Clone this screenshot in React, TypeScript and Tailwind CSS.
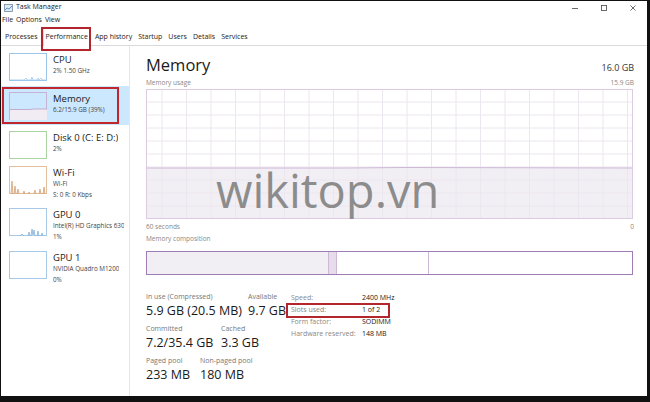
import React from "react";

const F = { fontFamily: '"Open Sans", "Noto Sans", sans-serif' };

function Thumb({ color, kind }: { color: string; kind: string }) {
  const w = 37;
  const h = 27;
  let content: React.ReactNode = null;
  if (kind === "cpu") {
    content = (
      <polyline
        fill="none"
        stroke={color}
        strokeWidth="0.8"
        points="0,26 14,26 16,24 17,26 21,26 22,23 23,26 27,26 28,24 29,26 31,24 32,26 37,26"
      />
    );
  } else if (kind === "mem") {
    content = (
      <>
        <rect x="0" y="16" width={w} height={11} fill="#f1ecf3" />
        <polyline fill="none" stroke="#b79cc4" strokeWidth="0.8" points="0,16.5 20,16.5 24,16 37,16" />
      </>
    );
  } else if (kind === "wifi") {
    content = (
      <g fill="#f3dcc8" stroke="#d09868" strokeWidth="0.7">
        <polygon points="1,27 2,14 3,27" />
        <polygon points="4,27 5,19 6,27" />
        <polygon points="7,27 8,22 9,27" />
        <polygon points="13,27 14,24 15,27" />
        <polygon points="18,27 19,25 20,27" />
        <polygon points="24,27 25,23 26,27" />
        <polygon points="29,27 30,22 31,27" />
        <polygon points="33,27 34,20 35,27" />
      </g>
    );
  } else if (kind === "gpu0") {
    content = (
      <g fill="#dcebf8" stroke="#79a9d6" strokeWidth="0.7">
        <polygon points="10,27 12,25 14,27" />
        <polygon points="18,27 19,23 20,27" />
        <polygon points="21,27 22,20 23,26 24,21 25,27" />
        <polygon points="27,27 28,22 29,27" />
        <polygon points="31,27 32,24 33,27" />
      </g>
    );
  }
  return (
    <div className="w-[38px] h-[28px] shrink-0" style={{ border: `1px solid ${color}` }}>
      <svg width={w} height={h} viewBox={`0 0 ${w} ${h}`} className="block">
        {content}
      </svg>
    </div>
  );
}

function SideItem({
  title,
  lines,
  color,
  kind,
  active,
  h,
}: {
  title: string;
  lines: string[];
  color: string;
  kind: string;
  active?: boolean;
  h: string;
}) {
  return (
    <div className={`relative flex items-start gap-[6px] pl-[8px] pt-[6px] ${h} ${active ? "bg-[#cce8ff]" : ""}`}>
      <Thumb color={color} kind={kind} />
      <div className="flex flex-col min-w-0 overflow-hidden whitespace-nowrap">
        <div className="text-[9.5px] leading-[13px] text-[#1a1a1a]">{title}</div>
        {lines.map((l, i) => (
          <div key={i} className="text-[6.3px] leading-[10.5px] text-[#444]">
            {l}
          </div>
        ))}
      </div>
      {active && (
        <div className="absolute left-[1px] top-[1px] w-[117px] h-[37px] border-2 border-[#c0272d]" />
      )}
    </div>
  );
}

function UsageGraph() {
  const W = 487;
  const H = 130;
  const vx: number[] = [];
  for (let x = 16; x < W; x += 24.5) vx.push(x);
  const hy: number[] = [];
  for (let y = 13; y < H; y += 13) hy.push(y);
  return (
    <svg width={W} height={H} viewBox={`0 0 ${W} ${H}`} className="block">
      <rect x="0" y="0" width={W} height={H} fill="#ffffff" />
      <rect x="0" y="79" width={W} height={H - 79} fill="#f2eff4" />
      {vx.map((x) => (
        <line key={"v" + x} x1={x} y1={0} x2={x} y2={H} stroke="#ece6ef" strokeWidth="1" />
      ))}
      {hy.map((y) => (
        <line key={"h" + y} x1={0} y1={y} x2={W} y2={y} stroke="#ece6ef" strokeWidth="1" />
      ))}
      <polyline fill="none" stroke="#cdb8d6" strokeWidth="1" points={`0,79 200,79 260,78.5 ${W},79`} />
      <rect x="0.5" y="0.5" width={W - 1} height={H - 1} fill="none" stroke="#dccbe3" strokeWidth="1" />
    </svg>
  );
}

function Stat({ label, value, className = "" }: { label: string; value: string; className?: string }) {
  return (
    <div className={`flex flex-col whitespace-nowrap shrink-0 ${className}`}>
      <div className="text-[7px] leading-[10px] text-[#777]">{label}</div>
      <div className="text-[12.5px] leading-[18px] text-[#1a1a1a]">{value}</div>
    </div>
  );
}

export default function App() {
  return (
    <div className="w-[650px] h-[402px] bg-[#111] pt-[1px] pl-[1px] pr-[3px] pb-[6px] overflow-hidden" style={F}>
      <div className="relative w-full h-full bg-white flex flex-col">
        {/* title bar */}
        <div className="h-[13px] flex items-center pl-[3px] pr-[10px] shrink-0">
          <svg width="9" height="8" viewBox="0 0 9 8" className="mr-[3px]">
            <rect x="0.5" y="0.5" width="8" height="7" fill="#dfe9f2" stroke="#6f8aa5" strokeWidth="0.8" />
            <polyline points="1,6 3,4 5,5 8,2" fill="none" stroke="#3b7bbf" strokeWidth="0.8" />
          </svg>
          <span className="text-[7px] text-[#222]">Task Manager</span>
          <div className="ml-auto flex items-center gap-[21px] text-[#333]">
            <svg width="8" height="8" viewBox="0 0 8 8">
              <line x1="1" y1="4.5" x2="7" y2="4.5" stroke="#444" strokeWidth="0.8" />
            </svg>
            <svg width="8" height="8" viewBox="0 0 8 8">
              <rect x="1.5" y="1.5" width="5" height="5" fill="none" stroke="#444" strokeWidth="0.8" />
            </svg>
            <svg width="8" height="8" viewBox="0 0 8 8">
              <path d="M1.5 1.5 L6.5 6.5 M6.5 1.5 L1.5 6.5" stroke="#444" strokeWidth="0.8" />
            </svg>
          </div>
        </div>
        {/* menu */}
        <div className="h-[13px] flex items-center gap-[3px] pl-[1px] text-[7px] text-[#222] shrink-0">
          <span>File</span>
          <span>Options</span>
          <span>View</span>
        </div>
        {/* tabs */}
        <div className="relative h-[19px] flex items-end pl-[2px] border-b border-[#dadada] shrink-0 text-[7px] text-[#222]">
          <div className="px-[2px] h-[15px] flex items-center">Processes</div>
          <div className="relative px-[2px] h-[18px] flex items-center bg-white border border-b-0 border-[#dadada] -mb-[1px] ml-[3px] mr-[1px]">
            Performance
            <div className="absolute -left-[3px] -top-[2px] w-[50px] h-[24px] border-2 border-[#b4262d]" />
          </div>
          <div className="px-[3px] h-[15px] flex items-center">App history</div>
          <div className="px-[3px] h-[15px] flex items-center">Startup</div>
          <div className="px-[3px] h-[15px] flex items-center">Users</div>
          <div className="px-[3px] h-[15px] flex items-center">Details</div>
          <div className="px-[3px] h-[15px] flex items-center">Services</div>
        </div>
        {/* content */}
        <div className="flex flex-1 min-h-0">
          {/* sidebar */}
          <div className="w-[129px] shrink-0 border-r border-[#e6e6e6] pt-[1px] flex flex-col">
            <SideItem h="h-[39px]" title="CPU" lines={["2%  1.50 GHz"]} color="#9cc6ea" kind="cpu" />
            <SideItem h="h-[39px]" title="Memory" lines={["6.2/15.9 GB (39%)"]} color="#c6b2d2" kind="mem" active />
            <SideItem h="h-[35px]" title="Disk 0 (C: E: D:)" lines={["2%"]} color="#a9d3a0" kind="disk" />
            <SideItem h="h-[42px]" title="Wi-Fi" lines={["Wi-Fi", "S: 0  R: 0 Kbps"]} color="#e2c09e" kind="wifi" />
            <SideItem h="h-[43px]" title="GPU 0" lines={["Intel(R) HD Graphics 630", "1%"]} color="#a8c9e8" kind="gpu0" />
            <SideItem h="h-[42px]" title="GPU 1" lines={["NVIDIA Quadro M1200", "0%"]} color="#a8c9e8" kind="gpu1" />
          </div>
          {/* main */}
          <div className="flex-1 pl-[16px] pr-[13px] pt-[6px] flex flex-col">
            <div className="flex items-end justify-between h-[24px]">
              <div className="text-[16.5px] leading-[22px] text-[#1a1a1a]">Memory</div>
              <div className="text-[9px] leading-[14px] text-[#333] mb-[1px]">16.0 GB</div>
            </div>
            <div className="flex justify-between text-[6.5px] leading-[9px] text-[#888] mt-[2px]">
              <span>Memory usage</span>
              <span>15.9 GB</span>
            </div>
            <div className="mt-[2px]">
              <UsageGraph />
            </div>
            <div className="flex justify-between text-[6.5px] leading-[9px] text-[#888] mt-[3px]">
              <span>60 seconds</span>
              <span>0</span>
            </div>
            <div className="text-[6.5px] leading-[9px] text-[#888] mt-[3px]">Memory composition</div>
            <div className="mt-[8px] h-[24px] w-[487px] flex border-[1.5px] border-[#a07cb4]">
              <div className="w-[181px] bg-[#f2eff4]" />
              <div className="w-[9px] bg-[#e6dcea] border-l border-r border-[#cdb8d6]" />
              <div className="w-[92px] border-r border-[#cdb8d6]" />
              <div className="flex-1" />
            </div>
            {/* stats */}
            <div className="flex mt-[17px]">
              <div className="flex flex-col w-[145px] shrink-0 gap-[4px]">
                <div className="flex">
                  <Stat className="w-[102px]" label="In use (Compressed)" value="5.9 GB (20.5 MB)" />
                  <Stat label="Available" value="9.7 GB" />
                </div>
                <div className="flex">
                  <Stat className="w-[75px]" label="Committed" value="7.2/35.4 GB" />
                  <Stat label="Cached" value="3.3 GB" />
                </div>
                <div className="flex">
                  <Stat className="w-[54px]" label="Paged pool" value="233 MB" />
                  <Stat label="Non-paged pool" value="180 MB" />
                </div>
              </div>
              <div className="relative grid grid-cols-[71px_auto] content-start text-[7px] leading-[12px] whitespace-nowrap">
                <span className="text-[#888]">Speed:</span>
                <span className="text-[#222]">2400 MHz</span>
                <span className="text-[#888]">Slots used:</span>
                <span className="text-[#222]">1 of 2</span>
                <span className="text-[#888]">Form factor:</span>
                <span className="text-[#222]">SODIMM</span>
                <span className="text-[#888]">Hardware reserved:</span>
                <span className="text-[#222]">148 MB</span>
                <div className="absolute -left-[5px] top-[11px] w-[104px] h-[15px] border-2 border-[#b4262d]" />
              </div>
            </div>
          </div>
        </div>
        {/* watermark */}
        <div
          className="absolute left-[215px] top-[158px] text-[47px] leading-[62px] text-[#8c8c8c] pointer-events-none"
          style={{ fontFamily: '"Open Sans", sans-serif' }}
        >
          wikitop.vn
        </div>
      </div>
    </div>
  );
}
